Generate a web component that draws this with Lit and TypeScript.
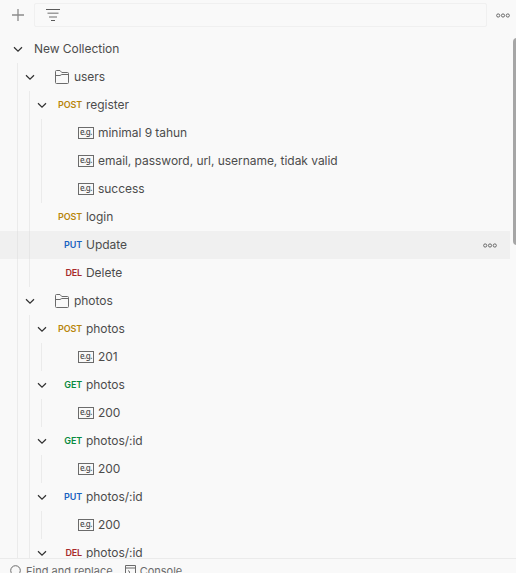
import { LitElement, html, svg, css, nothing } from "lit";
import { customElement } from "lit/decorators.js";
import { classMap } from "lit/directives/class-map.js";

type Kind = "collection" | "folder" | "request" | "example";
interface Item {
  kind: Kind;
  depth: number;
  label: string;
  method?: string;
  open?: boolean;
  active?: boolean;
}

const request = (method: string, label: string, open = true, active = false): Item => ({
  kind: "request", depth: 2, label, method, open, active,
});
const example = (label: string): Item => ({ kind: "example", depth: 3, label });
const folder = (label: string): Item => ({ kind: "folder", depth: 1, label, open: true });

const items: Item[] = [
  { kind: "collection", depth: 0, label: "New Collection", open: true },
  folder("users"),
  request("POST", "register"),
  example("minimal 9 tahun"),
  example("email, password, url, username, tidak valid"),
  example("success"),
  request("POST", "login", false),
  request("PUT", "Update", false, true),
  request("DEL", "Delete", false),
  folder("photos"),
  request("POST", "photos"),
  example("201"),
  request("GET", "photos"),
  example("200"),
  request("GET", "photos/:id"),
  example("200"),
  request("PUT", "photos/:id"),
  example("200"),
  request("DEL", "photos/:id"),
];

const dots = html`<svg class="dots" width="14" height="5" viewBox="0 0 14 5">
  ${[2.2, 7, 11.8].map((x) => svg`<circle cx=${x} cy="2.5" r="1.6" fill="none" stroke="#6b6b6b" stroke-width="1" />`)}
</svg>`;

@customElement("app-root")
export class AppRoot extends LitElement {
  static styles = css`
    :host {
      display: flex;
      flex-direction: column;
      height: 573px;
      overflow: hidden;
      background: #f9f9f9;
      color: #4c4c4c;
      font: 12px/28px Inter, sans-serif;
      white-space: nowrap;
    }
    svg { display: block; flex: none; }
    .toolbar {
      display: flex;
      align-items: center;
      box-sizing: border-box;
      height: 30px;
      flex: none;
      padding: 0 6px 0 12px;
    }
    .filter {
      display: flex;
      align-items: center;
      box-sizing: border-box;
      width: 453px;
      height: 24px;
      margin: 0 9px 0 10px;
      padding-left: 11px;
      border: 1px solid #f0f0f0;
      border-radius: 2px;
    }
    .body {
      display: flex;
      flex: 1;
      min-height: 0;
      padding-top: 5px;
      overflow: hidden;
    }
    .tree { width: 510px; flex: none; }
    .thumb {
      width: 8px;
      height: 207px;
      flex: none;
      margin: 3px 0 0 3px;
      border-radius: 4px;
      background: #a6a6a6;
    }
    .row {
      display: flex;
      align-items: center;
      box-sizing: border-box;
      height: 28px;
      padding: 0 13px 0 12px;
    }
    .active { background: #f0f0f0; }
    .guide {
      box-sizing: border-box;
      width: 7px;
      height: 28px;
      flex: none;
      margin: 0 0 0 5px;
      border-left: 1px solid #ebebeb;
    }
    .active .guide { border-color: #e6e6e6; }
    .toggle { width: 12px; flex: none; }
    .label { letter-spacing: -0.04px; }
    .collection .label { margin-left: 10px; }
    .folder .icon { margin: 0 5px 0 19px; }
    .example .icon { margin: 0 4px 0 18px; }
    .method {
      width: 34px;
      flex: none;
      margin-right: 4px;
      text-align: right;
      font-size: 9px;
      font-weight: 600;
      letter-spacing: -0.15px;
    }
    .post { color: #b8860b; }
    .put { color: #1a62c0; }
    .get { color: #0a8a40; }
    .del { color: #a82a2a; }
    .dots { margin-left: auto; }
    .footer {
      display: flex;
      box-sizing: border-box;
      height: 15px;
      flex: none;
      align-items: flex-start;
      padding: 0 9px;
      border-top: 1px solid #ebebeb;
      color: #6b6b6b;
      font-size: 11px;
      line-height: 25px;
      overflow: hidden;
    }
    .footer svg { margin-top: 6px; }
    .find { margin: 0 12px 0 4px; }
    .console { margin-left: 4px; }
  `;

  private chevron() {
    return html`<svg width="12" height="12" viewBox="0 0 12 12">
      <path d="M2 4.2 6 8.1 10 4.2" fill="none" stroke="#303030" stroke-width="1.2" />
    </svg>`;
  }

  private icon(item: Item) {
    switch (item.kind) {
      case "folder":
        return html`<svg class="icon" width="14" height="14" viewBox="0 0 14 14" fill="none" stroke="#6b6b6b">
          <path d="M.5 12.5V1.5Q.5.5 1.5.5H5L6.8 2.5H12.5Q13.5 2.5 13.5 3.5V12.5Q13.5 13.5 12.5 13.5H1.5Q.5 13.5 .5 12.5ZM.5 5.5H5L6.8 4.5H13.5" />
        </svg>`;
      case "example":
        return html`<svg class="icon" width="16" height="12" viewBox="0 0 16 12">
          <rect x=".5" y=".5" width="15" height="11" fill="none" stroke="#6b6b6b" />
          <text x="2" y="8" textLength="12.4" fill="#4a4a4a" font-family="Noto Sans" font-size="8" font-weight="500">e.g.</text>
        </svg>`;
      case "request":
        return html`<span class="method ${item.method!.toLowerCase()}">${item.method}</span>`;
      default:
        return nothing;
    }
  }

  private row(item: Item) {
    return html`<div class=${classMap({ row: true, [item.kind]: true, active: !!item.active })}>
      ${Array.from({ length: item.depth }, () => html`<span class="guide"></span>`)}
      <span class="toggle">${item.open ? this.chevron() : nothing}</span>
      ${this.icon(item)}
      <span class="label">${item.label}</span>
      ${item.active ? dots : nothing}
    </div>`;
  }

  render() {
    return html`
      <div class="toolbar">
        <svg width="12" height="12" viewBox="0 0 12 12">
          <path d="M6 0V12M0 6H12" stroke="#8c8c8c" stroke-width="1.3" />
        </svg>
        <div class="filter">
          <svg width="14" height="12" viewBox="0 0 14 12">
            <path d="M0 .5H14M5 11.5H9" stroke="#5a5a5a" />
            <path d="M1.5 4.2H12.5M3 8H11" stroke="#9c9c9c" stroke-width="1.4" />
          </svg>
        </div>
        ${dots}
      </div>
      <div class="body">
        <div class="tree">${items.map((item) => this.row(item))}</div>
        <div class="thumb"></div>
      </div>
      <div class="footer">
        <svg width="13" height="13" viewBox="0 0 13 13" fill="none" stroke="#6b6b6b">
          <circle cx="6.5" cy="5.5" r="4.8" /><path d="M3.5 9 .5 12" />
        </svg>
        <span class="find">Find and replace</span>
        <svg width="11" height="12" viewBox="0 0 11 12" fill="none" stroke="#6b6b6b">
          <path d="M.5 .5H10.5V11.5H.5ZM.5 3H10.5M3 5.5 5 7.2 3 9" />
        </svg>
        <span class="console">Console</span>
      </div>
    `;
  }
}
